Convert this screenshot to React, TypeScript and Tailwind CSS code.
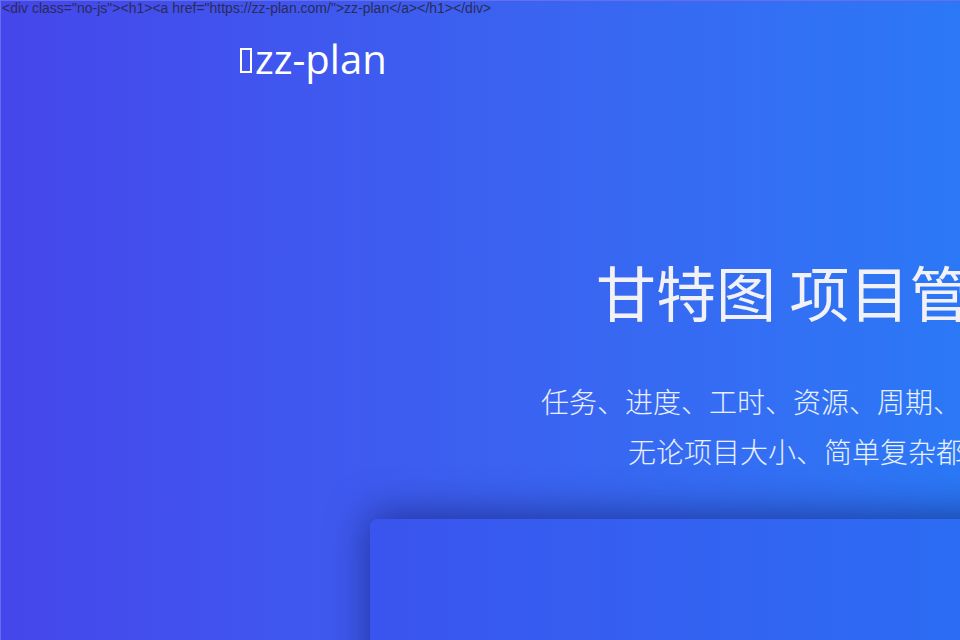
import React from "react";

const App: React.FC = () => {
  return (
    <div className="relative w-full h-[640px] overflow-hidden bg-gradient-to-r from-[#4546eb] to-[#2b78f6] border-t border-l border-[#6a6cf0]">
      {/* noscript fallback markup leaking through as text */}
      <p className="pl-px text-[14px] leading-[15px] text-[#2b2b55] font-['Liberation_Sans',Arial,sans-serif] whitespace-nowrap">
        {'<div class="no-js"><h1><a href="https://zz-plan.com/">zz-plan</a></h1></div>'}
      </p>

      {/* Brand */}
      <div className="mt-[19px] pl-[239px] flex items-center h-[48px] text-white text-[40px] leading-[48px] font-['Open_Sans','Noto_Sans',sans-serif]">
        <span className="inline-block w-[12px] h-[25px] border-2 border-white mr-[3px] mt-[2px]" />
        <span>zz-plan</span>
      </div>

      {/* Hero */}
      <div className="mt-[168px] whitespace-nowrap font-['Noto_Sans_CJK_SC','Noto_Sans',sans-serif]">
        <h1 className="pl-[595px] text-[60px] leading-[80px] text-[#f2f2f6] font-normal">
          甘特图 项目管理软件
        </h1>
        <div className="mt-[45px] text-[28px] leading-[50px] text-white/90 font-light">
          <p className="pl-[540px]">任务、进度、工时、资源、周期、成本一目了然</p>
          <p className="pl-[627px]">无论项目大小、简单复杂都能轻松管理</p>
        </div>
      </div>

      {/* Preview card */}
      <div className="mt-[43px] ml-[369px] w-[800px] h-[240px] rounded-lg bg-gradient-to-r from-[#3a54ee] to-[#2474f5] shadow-[0_-4px_40px_rgba(15,20,90,0.6)]" />
    </div>
  );
};

export default App;
